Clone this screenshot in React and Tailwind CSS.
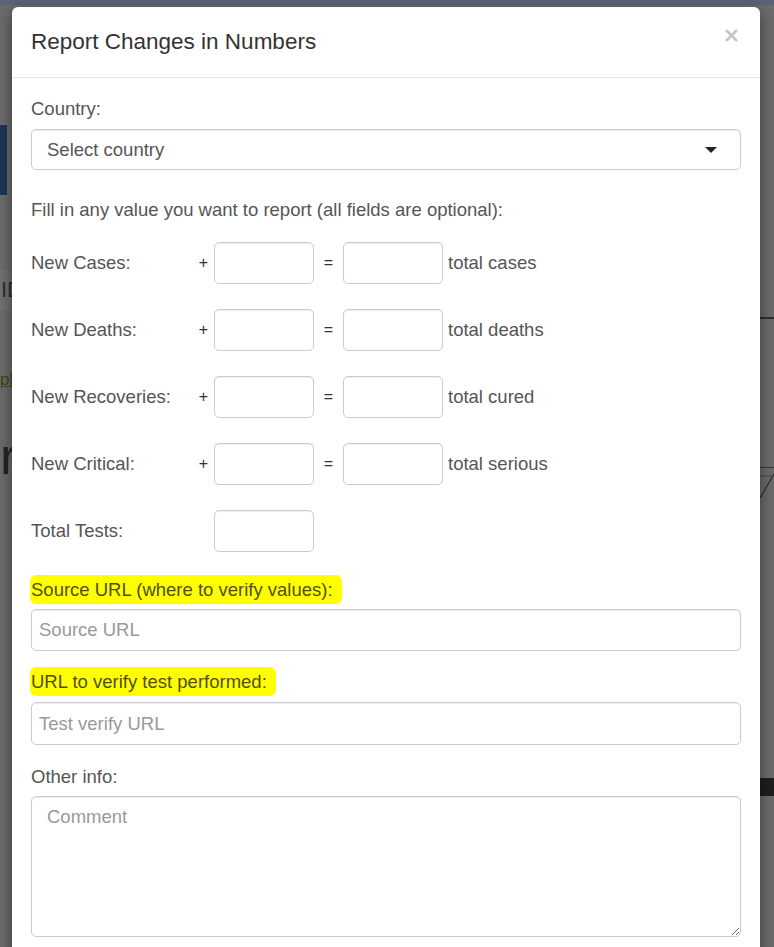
import { X } from 'lucide-react';

const ROWS = [
  { label: 'New Cases:', total: 'total cases' },
  { label: 'New Deaths:', total: 'total deaths' },
  { label: 'New Recoveries:', total: 'total cured' },
  { label: 'New Critical:', total: 'total serious' },
];

const field =
  'block rounded-[5px] border border-[#ccc] bg-white shadow-[inset_0_1px_1px_rgba(0,0,0,0.075)] text-[18.5px] text-[#555] outline-none placeholder:text-[#999]';

function Highlight({ children }) {
  return (
    <span className="inline-block -ml-[1px] rounded-[6px] bg-[#ffff00] pl-[1px] pr-[9px] py-[3px] leading-[23px] text-[#4f4f00]">
      {children}
    </span>
  );
}

function CountRow({ label, total }) {
  return (
    <div className="flex h-[42px] items-center">
      <span className="w-[166px] text-[#555]">{label}</span>
      <span className="w-[13px] text-center text-[16px] text-[#333]">+</span>
      <input className={`${field} ml-[4px] h-[42px] w-[100px] px-3`} />
      <span className="w-[29px] text-center text-[16px] text-[#333]">=</span>
      <input className={`${field} h-[42px] w-[100px] px-3`} />
      <span className="ml-[5px] text-[#555]">{total}</span>
    </div>
  );
}

export default function App() {
  return (
    <div className="relative h-[947px] overflow-hidden bg-[#6c6c6c] font-['Liberation_Sans',Arial,sans-serif]">
      {/* page behind the backdrop */}
      <div className="h-[5px] bg-[#5d6276]" />
      <div className="flex justify-between">
        <div className="flex w-[12px] flex-col overflow-hidden">
          <div className="mt-[120px] h-[70px] w-[7px] bg-[#1c3652]" />
          <div className="mt-[75px] flex h-[40px] items-center bg-[#727272] pl-[1px] text-[22px] leading-none text-[#2e2e2e]">
            ID
          </div>
          <div className="mt-[60px] whitespace-nowrap text-[17px] leading-[20px] text-[#3b4a17] underline">ph</div>
          <div className="mt-[40px] whitespace-nowrap text-[52px] leading-[52px] text-[#262626]">r</div>
        </div>
        <div className="flex w-[14px] flex-col">
          <div className="mt-[312px] h-[2px] bg-[#2f2f2f]" />
          <div className="mt-[148px] h-[1px] bg-[#3a3a3a]" />
          <svg width="14" height="30" className="block">
            <line x1="0" y1="30" x2="14" y2="6" stroke="#2f2f2f" strokeWidth="1.2" />
            <line x1="0" y1="8" x2="14" y2="8" stroke="#4a4a4a" strokeWidth="1" />
          </svg>
          <div className="mt-[280px] h-[18px] bg-[#1d1d1d]" />
        </div>
      </div>

      {/* modal */}
      <div className="absolute left-[12px] top-[7px] w-[748px] rounded-[6px] bg-white shadow-[0_5px_15px_rgba(0,0,0,0.5)]">
        <div className="flex h-[71px] items-center justify-between border-b border-[#e5e5e5] pl-[19px] pr-[19px]">
          <h4 className="text-[22.5px] leading-none text-[#333]">Report Changes in Numbers</h4>
          <button className="-mt-[14px] text-[#c4c4c4]">
            <X size={19} strokeWidth={3.2} />
          </button>
        </div>

        <div className="px-[19px] pt-[19px] pb-[20px] text-[18.5px]">
          <div className="leading-[24px] text-[#555]">Country:</div>
          <div className={`${field} mt-[8px] flex h-[41px] items-center justify-between pl-[15px] pr-[23px]`}>
            <span>Select country</span>
            <svg width="12" height="6" viewBox="0 0 12 6">
              <path d="M0 0h12L6 6z" fill="#222" />
            </svg>
          </div>

          <p className="mt-[28px] leading-[24px] text-[#555]">
            Fill in any value you want to report (all fields are optional):
          </p>

          <div className="mt-[20px] flex flex-col gap-[25px]">
            {ROWS.map((r) => (
              <CountRow key={r.label} {...r} />
            ))}
            <div className="flex h-[42px] items-center">
              <span className="w-[183px] text-[#555]">Total Tests:</span>
              <input className={`${field} h-[42px] w-[100px] px-3`} />
            </div>
          </div>

          <div className="mt-[23px] leading-[24px]">
            <Highlight>Source URL (where to verify values):</Highlight>
          </div>
          <input className={`${field} mt-[5px] h-[42px] w-full px-[7px]`} placeholder="Source URL" />

          <div className="mt-[16px] leading-[24px]">
            <Highlight>URL to verify test performed:</Highlight>
          </div>
          <input className={`${field} mt-[6px] h-[43px] w-full px-[7px]`} placeholder="Test verify URL" />

          <div className="mt-[20px] leading-[24px] text-[#555]">Other info:</div>
          <textarea
            className={`${field} mt-[7px] h-[141px] w-full resize-y px-[15px] py-[6px]`}
            placeholder="Comment"
          />
        </div>
      </div>
    </div>
  );
}
